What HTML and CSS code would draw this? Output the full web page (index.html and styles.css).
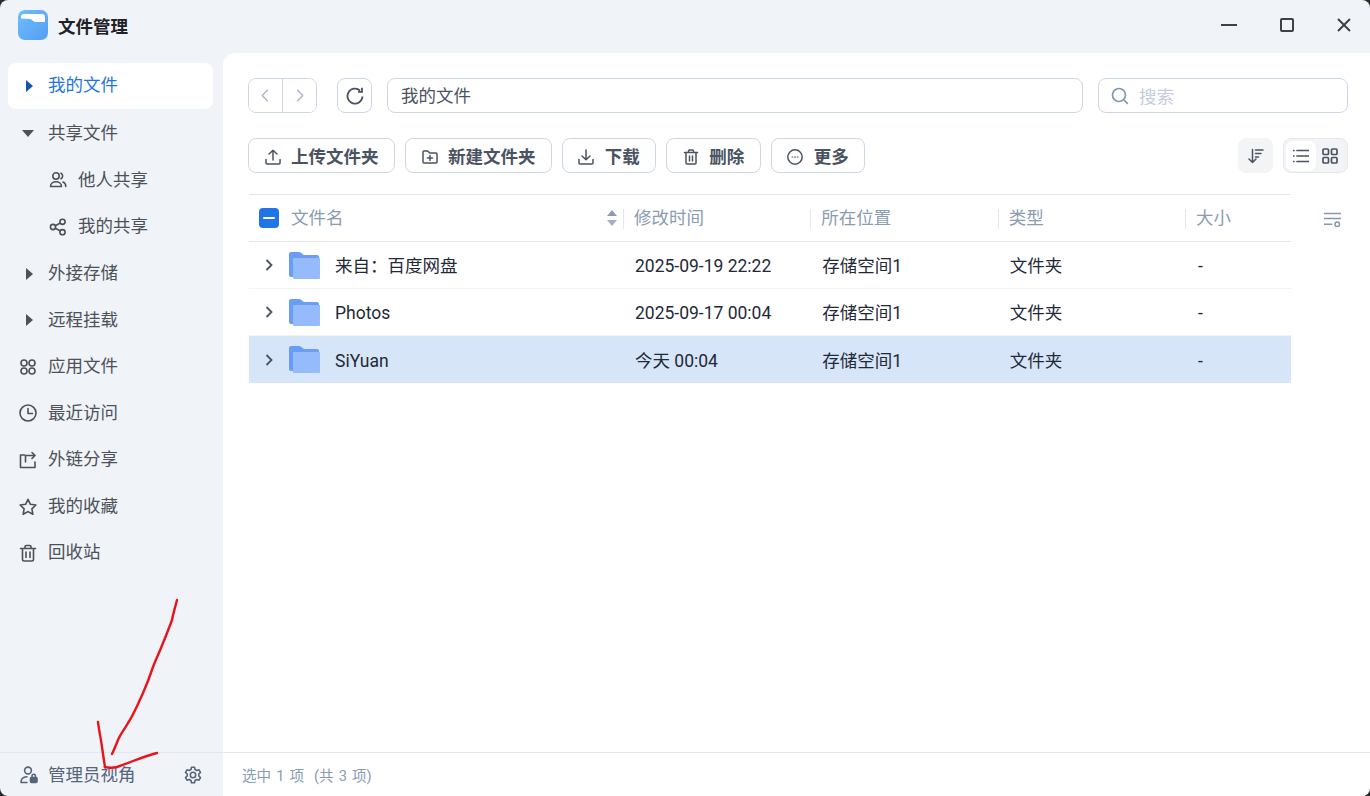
FILE: index.html
```html
<!DOCTYPE html>
<html lang="zh-CN">
<head>
<meta charset="utf-8">
<title>文件管理</title>
<link rel="stylesheet" href="styles.css">
</head>
<body>
<div class="app">
  <header class="titlebar">
    <svg class="app-logo" viewBox="0 0 30 30">
      <defs><linearGradient id="lg" x1="0" y1="0" x2="1" y2="1"><stop offset="0" stop-color="#6cc0fb"/><stop offset="1" stop-color="#559df5"/></linearGradient></defs>
      <rect width="30" height="30" rx="7" fill="url(#lg)"/>
      <path d="M3 8.500V7a3 3 0 0 1 3-3h18a3 3 0 0 1 3 3v5h-9.500a3 3 0 0 1-1.900-.7l-2.200-1.900a2 2 0 0 0-1.300-.5z" fill="#fff"/>
    </svg>
    <h1 class="app-name">文件管理</h1>
    <div class="win-controls">
      <svg class="win-ic" viewBox="0 0 16 16"><path d="M0 8h16" /></svg>
      <svg class="win-ic" viewBox="0 0 16 16"><rect x="2" y="2" width="12" height="12" rx="1"/></svg>
      <svg class="win-ic" viewBox="0 0 16 16"><path d="M2 2l12 12M14 2L2 14"/></svg>
    </div>
  </header>

  <nav class="sidebar">
    <a class="nav-item active"><span class="nav-ic"><svg class="caret" viewBox="0 0 7 12"><path d="M0 0l7 6-7 6z"/></svg></span>我的文件</a>
    <a class="nav-item"><span class="nav-ic"><svg class="caret down" viewBox="0 0 12 7"><path d="M0 0h12L6 7z"/></svg></span>共享文件</a>
    <a class="nav-item sub"><span class="nav-ic"><svg class="ic" viewBox="0 0 18 18"><circle cx="7" cy="5" r="3.200"/><path d="M1.500 15.500c0-3 2.500-4.700 5.500-4.700s5.500 1.700 5.500 4.700zM12 2.200a3.200 3.200 0 0 1 0 5.600M14 11c1.600.6 2.800 2 2.800 4.500"/></svg></span>他人共享</a>
    <a class="nav-item sub"><span class="nav-ic"><svg class="ic" viewBox="0 0 18 18"><circle cx="4" cy="9" r="2.600"/><circle cx="13.500" cy="3.800" r="2.600"/><circle cx="13.500" cy="14.200" r="2.600"/><path d="M6.300 7.700l5-2.700M6.300 10.300l5 2.700"/></svg></span>我的共享</a>
    <a class="nav-item"><span class="nav-ic"><svg class="caret" viewBox="0 0 7 12"><path d="M0 0l7 6-7 6z"/></svg></span>外接存储</a>
    <a class="nav-item"><span class="nav-ic"><svg class="caret" viewBox="0 0 7 12"><path d="M0 0l7 6-7 6z"/></svg></span>远程挂载</a>
    <a class="nav-item"><span class="nav-ic"><svg class="ic" viewBox="0 0 18 18"><circle cx="5" cy="5" r="3"/><circle cx="13" cy="5" r="3"/><circle cx="5" cy="13" r="3"/><circle cx="13" cy="13" r="3"/></svg></span>应用文件</a>
    <a class="nav-item"><span class="nav-ic"><svg class="ic" viewBox="0 0 18 18"><circle cx="9" cy="9" r="8"/><path d="M9 4.500V9.500h4.500"/></svg></span>最近访问</a>
    <a class="nav-item"><span class="nav-ic"><svg class="ic" viewBox="0 0 18 18"><path d="M5.500 4H1.500v12.500H16V11M6.500 11V4.500H16M13 1.500l3 3-3 3"/></svg></span>外链分享</a>
    <a class="nav-item"><span class="nav-ic"><svg class="ic" viewBox="0 0 18 18"><path d="M9 1.300l2.400 5 5.500.7-4 3.800 1 5.500L9 13.600l-4.900 2.700 1-5.500-4-3.800 5.500-.7z"/></svg></span>我的收藏</a>
    <a class="nav-item"><span class="nav-ic"><svg class="ic" viewBox="0 0 18 18"><path d="M1.500 4.500h15M6 4.500V2.700c0-.8.500-1.200 1.200-1.200h3.600c.7 0 1.200.4 1.200 1.200v1.800M3.500 4.500v10.800c0 1 .7 1.700 1.700 1.700h7.600c1 0 1.700-.7 1.700-1.700V4.500M7 8v5.500M11 8v5.500"/></svg></span>回收站</a>
  </nav>

  <main class="content">
    <div class="toolbar">
      <div class="nav-group">
        <button class="nav-btn"><svg class="ic-sm muted" viewBox="0 0 16 16"><path d="M10 2.500L4.500 8l5.500 5.500"/></svg></button>
        <button class="nav-btn"><svg class="ic-sm muted" viewBox="0 0 16 16"><path d="M6 2.500L11.500 8 6 13.500"/></svg></button>
      </div>
      <button class="square-btn refresh"><svg class="ic-md" viewBox="0 0 18 18"><path d="M16.500 9.500A7.500 7.500 0 1 1 14 3.500M16 .8v4h-4"/></svg></button>
      <div class="path-box">我的文件</div>
      <div class="search-box"><svg class="ic-search" viewBox="0 0 18 18"><circle cx="8" cy="8" r="6.500"/><path d="M13 13l3.800 3.800"/></svg><span>搜索</span></div>
    </div>
    <div class="actions">
      <button class="act-btn w147"><svg class="ic-sm" viewBox="0 0 16 16"><path d="M1 10.500v3.500a1 1 0 0 0 1 1h12a1 1 0 0 0 1-1v-3.500M8 11V1.500M4 5l4-3.700L12 5"/></svg>上传文件夹</button>
      <button class="act-btn w147"><svg class="ic-sm" viewBox="0 0 16 16"><path d="M1 3a1 1 0 0 1 1-1h3.700l2 2H14a1 1 0 0 1 1 1v8a1 1 0 0 1-1 1H2a1 1 0 0 1-1-1zM8 6.500v5M5.500 9h5"/></svg>新建文件夹</button>
      <button class="act-btn w94"><svg class="ic-sm" viewBox="0 0 16 16"><path d="M1 10.500v3.500a1 1 0 0 0 1 1h12a1 1 0 0 0 1-1v-3.500M8 1v9.500M4 7l4 3.700L12 7"/></svg>下载</button>
      <button class="act-btn w95"><svg class="ic-sm" viewBox="0 0 16 16"><path d="M1.500 3.500h13M5.500 3.500V2c0-.6.400-1 1-1h3c.6 0 1 .4 1 1v1.500M3 3.500V14c0 .6.400 1 1 1h8c.6 0 1-.4 1-1V3.500M6.500 7v5M9.500 7v5"/></svg>删除</button>
      <button class="act-btn w94"><svg class="ic-sm" viewBox="0 0 16 16"><circle cx="8" cy="8" r="7.200"/><path class="dots" d="M5 8h.8M7.600 8h.8M10.200 8h.8"/></svg>更多</button>
      <div class="spacer"></div>
      <button class="sort-btn"><svg class="ic-sm" viewBox="0 0 16 16"><path d="M4.500 1.500v13M1 11l3.500 3.500L8 11M7.500 2h7.500M7.500 5.500h5.500M7.500 9h3"/></svg></button>
      <div class="view-toggle">
        <span class="view-opt on"><svg class="ic-sm" viewBox="0 0 16 16"><path d="M4 2.500h12M4 8h12M4 13.500h12M0 2.500h1M0 8h1M0 13.500h1"/></svg></span>
        <span class="view-opt"><svg class="ic-sm" viewBox="0 0 16 16"><rect x="1" y="1" width="5.500" height="5.500" rx="1"/><rect x="9.500" y="1" width="5.500" height="5.500" rx="1"/><rect x="1" y="9.500" width="5.500" height="5.500" rx="1"/><rect x="9.500" y="9.500" width="5.500" height="5.500" rx="1"/></svg></span>
      </div>
    </div>
    <div class="table-wrap">
      <div class="table">
        <div class="thead row-grid">
          <div class="th first"><span class="checkbox"><i></i></span>文件名<svg class="sorter" viewBox="0 0 12 18"><path class="up" d="M6 1l5 6H1z"/><path d="M6 17l5-6H1z"/></svg></div>
          <div class="th">修改时间</div>
          <div class="th">所在位置</div>
          <div class="th">类型</div>
          <div class="th">大小</div>
        </div>
        <div class="tr row-grid">
          <div class="td first"><svg class="chev" viewBox="0 0 10 14"><path d="M2.500 2l5 5-5 5"/></svg><svg class="folder" viewBox="0 0 31 27"><path d="M0 2a2 2 0 0 1 2-2h8c1 0 1.600.3 2.300.9L15 3h13a2 2 0 0 1 2 2v20H2a2 2 0 0 1-2-2z" fill="#6a9df5"/><path d="M5 6h26v20a1 1 0 0 1-1 1H5a1 1 0 0 1-1-1V7a1 1 0 0 1 1-1z" fill="#95bbfc"/></svg><span class="fname">来自：百度网盘</span></div>
          <div class="td">2025-09-19 22:22</div><div class="td">存储空间1</div><div class="td">文件夹</div><div class="td last">-</div>
        </div>
        <div class="tr row-grid">
          <div class="td first"><svg class="chev" viewBox="0 0 10 14"><path d="M2.500 2l5 5-5 5"/></svg><svg class="folder" viewBox="0 0 31 27"><path d="M0 2a2 2 0 0 1 2-2h8c1 0 1.600.3 2.300.9L15 3h13a2 2 0 0 1 2 2v20H2a2 2 0 0 1-2-2z" fill="#6a9df5"/><path d="M5 6h26v20a1 1 0 0 1-1 1H5a1 1 0 0 1-1-1V7a1 1 0 0 1 1-1z" fill="#95bbfc"/></svg><span class="fname">Photos</span></div>
          <div class="td">2025-09-17 00:04</div><div class="td">存储空间1</div><div class="td">文件夹</div><div class="td last">-</div>
        </div>
        <div class="tr row-grid selected">
          <div class="td first"><svg class="chev" viewBox="0 0 10 14"><path d="M2.500 2l5 5-5 5"/></svg><svg class="folder" viewBox="0 0 31 27"><path d="M0 2a2 2 0 0 1 2-2h8c1 0 1.600.3 2.300.9L15 3h13a2 2 0 0 1 2 2v20H2a2 2 0 0 1-2-2z" fill="#6a9df5"/><path d="M5 6h26v20a1 1 0 0 1-1 1H5a1 1 0 0 1-1-1V7a1 1 0 0 1 1-1z" fill="#95bbfc"/></svg><span class="fname">SiYuan</span></div>
          <div class="td">今天 00:04</div><div class="td">存储空间1</div><div class="td">文件夹</div><div class="td last">-</div>
        </div>
      </div>
      <svg class="col-settings" viewBox="0 0 18 16"><path d="M0 1h18M0 6.500h18M0 12.500h9"/><circle cx="14" cy="12.500" r="2.400"/></svg>
    </div>
  </main>

  <div class="side-foot">
    <svg class="ic foot-ic" viewBox="0 0 18 18"><circle cx="8" cy="4.500" r="3.400"/><path d="M1 16.500c0-3.500 2-5.500 6-5.700M1 16.500h6"/><rect class="solid" x="10.500" y="11.500" width="6.500" height="5" rx="1"/><path d="M12 11.500V10a1.700 1.700 0 0 1 3.400 0v1.500"/></svg>
    <span class="foot-label">管理员视角</span>
    <svg class="ic gear" viewBox="0 0 18 18"><circle cx="9" cy="9" r="2.700"/><path d="M7.500 1.200h3l.5 2.300 1.700 1 2.300-.7 1.500 2.600-1.700 1.600v2l1.700 1.600-1.500 2.600-2.300-.7-1.700 1-.5 2.300h-3l-.5-2.300-1.700-1-2.300.7-1.500-2.600 1.700-1.600v-2L1.500 6.400 3 3.800l2.300.7 1.700-1z"/></svg>
  </div>
  <footer class="statusbar">选中 1 项&nbsp;&nbsp;(共 3 项)</footer>

  <svg class="scribble" viewBox="0 0 1370 796"><path d="M177 600C175 608 173 614 172 620C169 628 166 636 163 643C160 651 156 659 153 667C150 676 147 684 143 693C138 704 134 714 128 723C124 730 120 735 118 740C116 745 114 750 112 754"/><path d="M98 722C99 731 101 739 102 747C103 754 104 761 105 767C109 768 113 768 117 767C123 765 128 763 133 761C141 758 149 755 157 753"/></svg>
</div>
</body>
</html>
```
FILE: styles.css
```css
* { box-sizing: border-box; }
html, body { margin: 0; height: 100%; background: #2a2a2a; }
body {
  font-family: Roboto, "Noto Sans CJK SC", "Noto Sans", sans-serif;
  font-size: 17.5px;
  color: #1f2937;
  overflow: hidden;
}
svg { display: block; flex: none; fill: none; stroke: currentColor; }
button { font: inherit; background: #fff; padding: 0; color: inherit; }

.app {
  position: relative;
  width: 1370px;
  height: 796px;
  border-radius: 8px;
  overflow: hidden;
  background: #f0f3f8;
  display: grid;
  grid-template-columns: 223px 1fr;
  grid-template-rows: 53px 1fr 44px;
}

/* title bar */
.titlebar {
  grid-column: 1 / 3;
  display: flex;
  align-items: center;
  padding: 0 18px 0 18px;
}
.app-logo { width: 30px; height: 30px; stroke: none; margin-top: -3px; }
.app-name { margin: 2px 0 0 10px; font-size: 17.5px; font-weight: 700; color: #1e2127; line-height: 1; }
.win-controls { margin-left: auto; display: flex; gap: 42px; margin-top: -3px; align-items: center; }
.win-ic { width: 16px; height: 16px; stroke: #3c4148; stroke-width: 2; }
.win-ic:nth-child(2) { margin-right: -1px; }

/* sidebar */
.sidebar { padding: 10px 10px 0 8px; display: flex; flex-direction: column; }
.nav-item {
  height: 46.600px;
  flex: none;
  display: flex;
  align-items: center;
  border-radius: 8px;
  color: #4d5158;
  padding: 2px 0 0 10px;
  line-height: 1;
}
.nav-item.active { background: #fff; color: #1f74e6; padding-top: 0; height: 46px; margin-bottom: .6px; }
.nav-item.sub { padding-left: 40px; }
.nav-ic { width: 30px; display: flex; align-items: center; flex: none; }
.caret { width: 7px; height: 12px; fill: #4d5158; stroke: none; margin-left: 8px; }
.caret.down { width: 12px; height: 7px; margin-left: 4px; }
.active .caret { fill: #1a55ad; }
.ic { width: 18px; height: 18px; stroke: #4d5158; stroke-width: 1.600; stroke-linejoin: round; stroke-linecap: round; }
.nav-ic .ic { margin-left: 1px; }

/* main */
.content {
  background: #fff;
  border-top-left-radius: 12px;
  padding: 25px 22px 0 25px;
  min-height: 0;
}
.toolbar { display: flex; align-items: center; height: 35px; }
.nav-group { display: flex; width: 69px; height: 35px; border: 1px solid #cdd7e4; border-radius: 8px; overflow: hidden; }
.nav-btn { flex: 1; border: 0; display: flex; align-items: center; justify-content: center; }
.nav-btn + .nav-btn { border-left: 1px solid #cdd7e4; }
.ic-sm { width: 16px; height: 16px; stroke: #4a5362; stroke-width: 1.500; stroke-linecap: round; stroke-linejoin: round; }
.muted { stroke: #a9b8cb; stroke-width: 1.600; width: 15px; height: 15px; }
.square-btn { width: 35px; height: 35px; border: 1px solid #cdd7e4; border-radius: 8px; margin-left: 20px; display: flex; align-items: center; justify-content: center; }
.ic-md { width: 18px; height: 18px; stroke: #4a5362; stroke-width: 1.800; }
.path-box { flex: 1; height: 35px; margin-left: 15px; border: 1px solid #cdd7e4; border-radius: 8px; display: flex; align-items: center; padding: 0 0 2px 13px; color: #4a5362; }
.search-box { width: 250px; height: 35px; margin-left: 15px; border: 1px solid #cdd7e4; border-radius: 8px; display: flex; align-items: center; padding-left: 12px; color: #c3cddb; }
.search-box span { margin-left: 10px; }
.ic-search { width: 18px; height: 18px; stroke: #8597ae; stroke-width: 1.700; }

.actions { display: flex; align-items: center; gap: 10px; height: 35px; margin-top: 25px; }
.act-btn {
  height: 35px;
  border: 1px solid #cdd7e4;
  border-radius: 8px;
  display: flex;
  align-items: center;
  justify-content: center;
  gap: 10.500px;
  padding-top: 4px;
  font-weight: 700;
  color: #4a5362;
  line-height: 1;
}
.act-btn .ic-sm { margin-top: -2px; }
.w147 { width: 147px; }
.w95 { width: 95px; }
.w94 { width: 94px; }
.dots { stroke-width: 1.200; }
.spacer { flex: 1; }
.sort-btn { width: 35px; height: 35px; border: 0; border-radius: 8px; background: #f3f4f6; display: flex; align-items: center; justify-content: center; }
.view-toggle { width: 65px; height: 35px; border: 1px solid #e5e8ed; border-radius: 8px; background: #f3f4f6; display: flex; align-items: center; padding: 2px; }
.view-opt { width: 30px; height: 30px; border-radius: 7px; display: flex; align-items: center; justify-content: center; }
.view-opt.on { background: #fff; }
.view-opt .ic-sm { stroke-width: 1.700; }

.table-wrap { position: relative; margin: 21px 0 0 1px; width: 1042px; }
.table { border-top: 1px solid #e2e8f0; }
.row-grid { display: grid; grid-template-columns: 374px 187.250px 187.500px 187.250px 1fr; }
.thead { height: 47px; border-bottom: 1px solid #e2e8f0; color: #8a9bb2; align-items: center; }
.th { position: relative; display: flex; align-items: center; height: 100%; padding: 2px 0 0 11px; line-height: 1; }
.th + .th::before { content: ""; position: absolute; left: 0; top: 14px; height: 20px; width: 1px; background: #e2e8f0; }
.th.first { padding-left: 10px; }
.checkbox { width: 20px; height: 20px; border-radius: 4px; background: #1f74e6; margin: -2px 12px 0 0; display: flex; align-items: center; justify-content: center; }
.checkbox i { width: 12px; height: 2.400px; border-radius: 1px; background: #fff; display: block; }
.sorter { width: 12px; height: 20px; margin: -2px 5px 0 auto; fill: #a3b0c2; stroke: none; }
.sorter .up { fill: #8a9bb2; }

.tr { height: 47px; border-bottom: 1px solid #f1f3f6; align-items: center; color: #1f2937; }
.tr .td { padding: 4px 0 0 12px; line-height: 1; }
.tr .td.last { padding-left: 13px; }
.tr.selected { background: #d6e5f8; border-bottom: 0; }
.tr .td.first { display: flex; align-items: center; padding: 0 0 0 15px; }
.chev { width: 10px; height: 14px; stroke: #4a5362; stroke-width: 1.800; }
.folder { width: 31px; height: 27px; stroke: none; margin: 0 0 0 15px; }
.fname { margin: 4px 0 0 15px; }

.col-settings { position: absolute; left: 1075px; top: 18px; width: 17px; height: 16px; stroke: #8597ae; stroke-width: 1.600; }

/* footer */
.side-foot {
  border-top: 1px solid #e2e8f0;
  display: flex;
  align-items: center;
  padding: 0 21px 0 20px;
  color: #56657a;
}
.foot-ic { width: 18px; height: 18px; stroke: #56657a; }
.foot-ic .solid { fill: #56657a; }
.foot-label { margin: 2px 0 0 10px; line-height: 1; }
.gear { margin-left: auto; stroke: #56657a; }
.statusbar {
  background: #fff;
  border-top: 1px solid #e2e8f0;
  display: flex;
  align-items: center;
  padding-left: 19px;
  font-size: 14.600px;
  word-spacing: 1.400px;
  color: #8a9bb2;
}

/* red pen annotation drawn over the screenshot */
.scribble {
  position: absolute;
  inset: 0;
  width: 1370px;
  height: 796px;
  stroke: #e8141c;
  stroke-width: 2.400;
  stroke-linejoin: round;
  stroke-linecap: round;
  pointer-events: none;
}
```
